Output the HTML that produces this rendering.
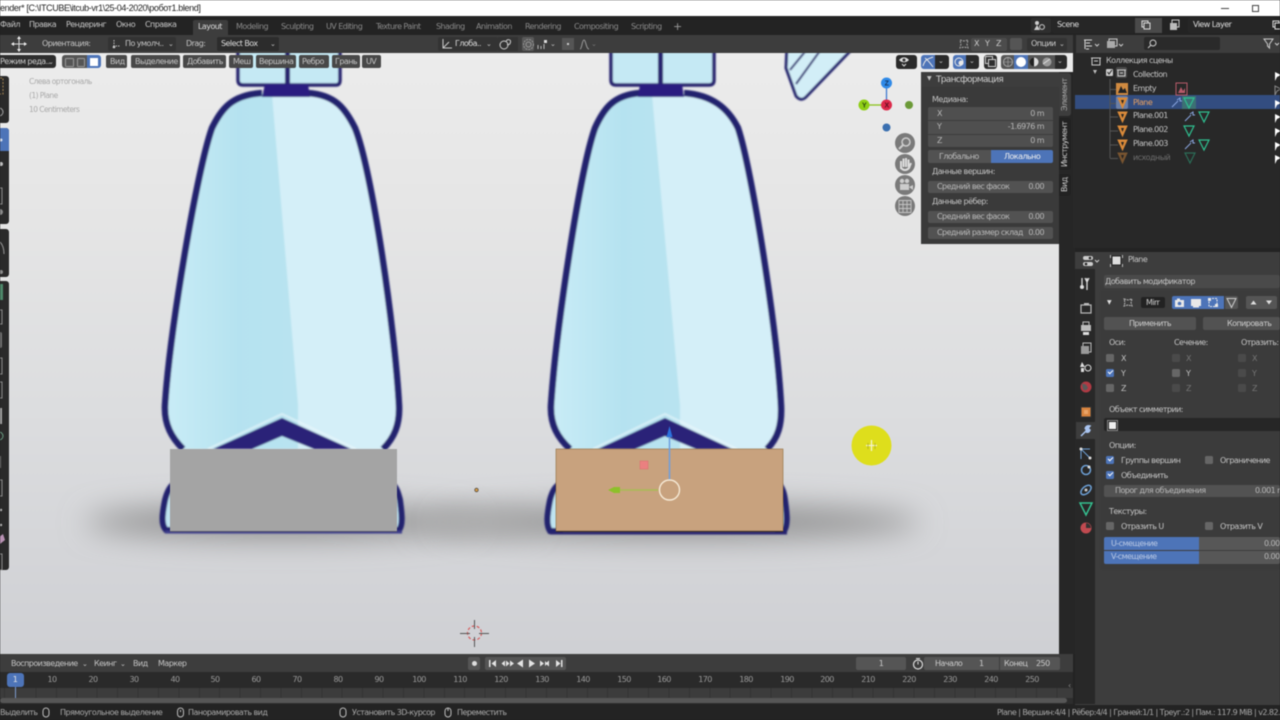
<!DOCTYPE html>
<html lang="ru"><head><meta charset="utf-8"><title>Blender</title>
<style>
html,body{margin:0;padding:0;width:1280px;height:720px;overflow:hidden;background:#232323}
#r{position:relative;width:1280px;height:720px;overflow:hidden;font-family:"DejaVu Sans","Liberation Sans",sans-serif;font-size:8px;letter-spacing:-.55px;color:#c4c4c4;filter:blur(.45px);background:#232323}
.b{position:absolute}
.t{position:absolute;white-space:nowrap;line-height:12px;height:12px}
.c{transform:translateX(-50%)}
.e{text-align:right}
.f{position:absolute;background:#545454;border-radius:2px}
.d{position:absolute;background:#262626;border-radius:2px}
.k{position:absolute;width:8px;height:8px;background:#666;border-radius:1.5px}
.k.o{background:#4d74b8}
.k.o:after{content:"";position:absolute;left:1.5px;top:1px;width:4px;height:2px;border-left:1.2px solid #fff;border-bottom:1.2px solid #fff;transform:rotate(-45deg)}
.k.g{background:#4a4a4a}
.u{color:#777}
svg{position:absolute;overflow:visible}
</style></head><body><div id="r">

<!-- title bar -->
<div class="b" style="left:0;top:0;width:1280px;height:16px;background:#fff"></div>
<div class="t" style="left:0;top:2px;color:#222;font-family:'Liberation Sans',sans-serif;font-size:9px;letter-spacing:-.38px">ender* [C:\ITCUBE\itcub-vr1\25-04-2020\робот1.blend]</div>
<div class="b" style="left:1221px;top:8px;width:8px;height:1px;background:#444"></div>
<div class="b" style="left:1252px;top:5px;width:5px;height:5px;border:1px solid #444;background:#fff"></div>

<!-- top bar -->
<div class="b" style="left:0;top:16px;width:1280px;height:19px;background:#232323"></div>
<div class="t" style="left:0;top:19px">Файл</div>
<div class="t" style="left:29px;top:19px">Правка</div>
<div class="t" style="left:66px;top:19px">Рендеринг</div>
<div class="t" style="left:116px;top:19px">Окно</div>
<div class="t" style="left:145px;top:19px">Справка</div>
<div class="b" style="left:193px;top:20px;width:35px;height:15px;background:#3d3d3d;border-radius:2px 2px 0 0"></div>
<div class="t" style="left:198px;top:21px;color:#ddd">Layout</div>
<div class="t u" style="left:236px;top:21px;color:#8a8a8a">Modeling</div>
<div class="t" style="left:281px;top:21px;color:#8a8a8a">Sculpting</div>
<div class="t" style="left:326px;top:21px;color:#8a8a8a">UV Editing</div>
<div class="t" style="left:376px;top:21px;color:#8a8a8a">Texture Paint</div>
<div class="t" style="left:436px;top:21px;color:#8a8a8a">Shading</div>
<div class="t" style="left:476px;top:21px;color:#8a8a8a">Animation</div>
<div class="t" style="left:525px;top:21px;color:#8a8a8a">Rendering</div>
<div class="t" style="left:574px;top:21px;color:#8a8a8a">Compositing</div>
<div class="t" style="left:631px;top:21px;color:#8a8a8a">Scripting</div>
<div class="t" style="left:673px;top:21px;font-size:11px;color:#999">+</div>

<div class="b" style="left:1031px;top:18px;width:20px;height:15px;background:#2e2e2e;border-radius:2px"></div>
<svg style="left:1033px;top:20px" width="14" height="11"><circle cx="4" cy="3" r="2" fill="#ccc"/><path d="M1 10 L4 5 L7 10Z" fill="#ccc"/><circle cx="9" cy="7" r="2.4" fill="none" stroke="#ccc"/></svg>
<div class="d" style="left:1052px;top:18px;width:83px;height:15px"></div>
<div class="t" style="left:1057px;top:19px;color:#ddd">Scene</div>
<div class="b" style="left:1135px;top:18px;width:27px;height:15px;background:#4a4a4a"></div>
<svg style="left:1141px;top:20px" width="10" height="10"><rect x="1" y="1" width="6" height="6" fill="none" stroke="#ddd"/><rect x="3" y="3" width="6" height="6" fill="#4a4a4a" stroke="#ddd"/></svg>
<svg style="left:1170px;top:20px" width="14" height="11"><rect x="2" y="0" width="7" height="7" fill="none" stroke="#ccc"/><rect x="0" y="3" width="7" height="7" fill="#bbb"/></svg>
<div class="d" style="left:1188px;top:18px;width:87px;height:15px"></div>
<div class="t" style="left:1193px;top:19px;color:#ddd">View Layer</div>
<svg style="left:1272px;top:20px" width="10" height="10"><rect x="1" y="1" width="6" height="6" fill="none" stroke="#ddd"/><rect x="3" y="3" width="6" height="6" fill="#232323" stroke="#ddd"/></svg>

<!-- tool header -->
<div class="b" style="left:0;top:35px;width:1073px;height:18px;background:#3d3d3d"></div>
<svg style="left:11px;top:36px" width="16" height="16"><path d="M8 1V15M1 8H15" stroke="#ddd" stroke-width="1" fill="none"/><path d="M8 0L10 3H6ZM8 16L10 13H6ZM0 8L3 6V10ZM16 8L13 6V10Z" fill="#eee"/></svg>
<div class="t" style="left:42px;top:38px">Ориентация:</div>
<div class="d" style="left:108px;top:37px;width:68px;height:14px;background:#333"></div>
<svg style="left:111px;top:39px" width="10" height="11"><path d="M3 1V7H9" stroke="#bbb" fill="none" stroke-dasharray="1.5 1"/><circle cx="3" cy="8" r="1.3" fill="#ccc"/></svg>
<div class="t" style="left:125px;top:38px">По умолч..</div>
<div class="t" style="left:168px;top:38px;font-size:7px">⌄</div>
<div class="t" style="left:186px;top:38px">Drag:</div>
<div class="d" style="left:217px;top:37px;width:62px;height:14px;background:#2c2c2c"></div>
<div class="t" style="left:221px;top:38px;color:#ddd">Select Box</div>
<div class="t" style="left:270px;top:38px;font-size:7px">⌄</div>

<div class="b" style="left:438px;top:37px;width:60px;height:14px;background:#333;border-radius:2px"></div>
<svg style="left:441px;top:38px" width="12" height="12"><path d="M2 1V10H11M2 10L8 4" stroke="#ccc" fill="none"/></svg>
<div class="t" style="left:455px;top:38px;color:#ddd">Глоба..</div>
<div class="t" style="left:486px;top:38px;font-size:7px">⌄</div>
<div class="b" style="left:498px;top:37px;width:20px;height:14px;background:#333"></div>
<svg style="left:499px;top:38px" width="13" height="12"><circle cx="5" cy="7" r="4" fill="none" stroke="#ccc"/><path d="M7 3.5C8 1 12 1 11.500 4C11 7 9 7 8 6.500" fill="none" stroke="#ccc"/></svg>
<div class="b" style="left:522px;top:37px;width:12px;height:14px;background:#595959;border-radius:2px"></div>
<svg style="left:523px;top:39px" width="11" height="11"><circle cx="5.500" cy="5.500" r="5" fill="none" stroke="#999" stroke-dasharray="2 1"/><circle cx="5.500" cy="5.500" r="2.500" fill="none" stroke="#999"/></svg>
<svg style="left:537px;top:39px" width="11" height="11"><path d="M1 6V10M4 7V10M7 5V10" stroke="#bbb"/><rect x="7" y="1" width="3" height="3" fill="#ddd"/></svg>
<div class="t" style="left:550px;top:38px;font-size:7px">⌄</div>
<div class="b" style="left:562px;top:38px;width:12px;height:12px;background:#555"></div>
<div class="b" style="left:567px;top:43px;width:2px;height:2px;background:#ccc"></div>
<svg style="left:579px;top:39px" width="12" height="11"><path d="M1 10C3 10 3 1 5 1C7 1 7 10 10 10" fill="none" stroke="#999"/></svg>
<div class="t" style="left:591px;top:38px;font-size:7px;color:#777">⌄</div>

<svg style="left:958px;top:38px" width="12" height="12"><path d="M2 2L6 3L10 2L9 6L10 10L6 9L2 10L3 6Z" fill="none" stroke="#aaa" stroke-dasharray="2 1"/></svg>
<div class="b" style="left:971px;top:38px;width:36px;height:13px;background:#4c4c4c;border-radius:2px"></div>
<div class="t" style="left:974px;top:38px;color:#ccc">X</div>
<div class="t" style="left:985px;top:38px;color:#ccc">Y</div>
<div class="t" style="left:996px;top:38px;color:#ccc">Z</div>
<div class="b" style="left:1010px;top:38px;width:12px;height:12px;background:#555;border-radius:2px"></div>
<div class="b" style="left:1027px;top:38px;width:40px;height:13px;background:#333;border-radius:2px"></div>
<div class="t" style="left:1031px;top:38px;color:#ccc">Опции</div>
<div class="t" style="left:1059px;top:38px;font-size:7px">⌄</div>

<!-- viewport -->
<div class="b" style="left:0;top:53px;width:1073px;height:601px;background:linear-gradient(180deg,#ececec 0%,#e6e6e6 25%,#dcdddf 60%,#cfd0d4 100%);overflow:hidden">
<svg style="left:0;top:-53px" width="1073" height="654">
<defs>
<filter id="bl" x="-30%" y="-150%" width="160%" height="400%"><feGaussianBlur stdDeviation="15"/></filter>
<filter id="sf"><feGaussianBlur stdDeviation=".8"/></filter>
<linearGradient id="lb" x1="0" x2="1" y1="0" y2="0"><stop offset="0" stop-color="#c9ecf6"/><stop offset=".55" stop-color="#b5e2f0"/><stop offset="1" stop-color="#b8e3f0"/></linearGradient>
</defs>
<ellipse cx="280" cy="522" rx="195" ry="16" fill="#8c8c8c" filter="url(#bl)"/>
<ellipse cx="680" cy="522" rx="240" ry="16" fill="#8c8c8c" filter="url(#bl)"/>
<ellipse cx="475" cy="522" rx="60" ry="9" fill="#a8a8a8" filter="url(#bl)"/>

<g filter="url(#sf)">
<!-- right diagonal thing -->
<path d="M787 45L786 68L796 96Q801 102 806 97L856 45Z" fill="#d2eef7" stroke="#26266f" stroke-width="3"/>
<path d="M790 70L808 48M796 84L822 48" stroke="#26266f" stroke-width="2" fill="none"/>

<!-- left leg -->
<path d="M238 45V80Q238 85 243 85H336Q340 85 340 80V45Z" fill="#c5e9f4" stroke="#25246e" stroke-width="3.500"/>
<rect x="285" y="45" width="5" height="42" fill="#25246e"/>
<path d="M262 93C232 95 222 108 212 128C197 170 170 330 165 405C164 425 172 438 183 449H383C394 438 400 425 399 405C395 330 372 170 355 128C345 108 335 95 308 93Z" fill="#d4eff8"/>
<path d="M262 93C232 95 222 108 212 128C197 170 170 330 165 405C164 425 172 438 183 449H298L298 405L272 95Z" fill="url(#lb)"/>
<path d="M262 93C232 95 222 108 212 128C197 170 170 330 165 405C164 425 172 438 183 449M308 93C335 95 345 108 355 128C372 170 395 330 399 405C400 425 394 438 383 449" fill="none" stroke="#23236e" stroke-width="6.500"/>
<path d="M265 84H308L310 97H262Z" fill="#2c1f80"/>
<path d="M208 449L282 414L356 449" fill="none" stroke="#eef8fb" stroke-width="2" opacity=".6"/>
<path d="M213 449L282 418L351 449H314L282 436L252 449Z" fill="#2a2378"/>
<path d="M165 500C162 515 161 525 166 530H174V484C170 486 167 492 165 500Z" fill="#bfe4f1" stroke="#23236e" stroke-width="6"/>
<path d="M400 500C402 515 403 525 399 530H392V484C396 486 398 492 400 500Z" fill="#bfe4f1" stroke="#23236e" stroke-width="6"/>
<path d="M165 532H402" stroke="#3a3a8a" stroke-width="3"/>

<!-- right leg -->
<path d="M611 45V80Q611 85 616 85H709Q714 85 714 80V45Z" fill="#c5e9f4" stroke="#25246e" stroke-width="3.500"/>
<rect x="658" y="45" width="5" height="42" fill="#25246e"/>
<path d="M640 93C614 95 604 108 595 128C580 170 556 330 551 405C550 425 558 438 570 449H767C778 438 782 425 781 405C777 330 752 170 738 128C728 108 712 95 684 93Z" fill="#d4eff8"/>
<path d="M640 93C614 95 604 108 595 128C580 170 556 330 551 405C550 425 558 438 570 449H680L680 405L652 95Z" fill="url(#lb)"/>
<path d="M640 93C614 95 604 108 595 128C580 170 556 330 551 405C550 425 558 438 570 449M684 93C712 95 728 108 738 128C752 170 777 330 781 405C782 425 778 438 767 449" fill="none" stroke="#23236e" stroke-width="6.500"/>
<path d="M640 84H682L684 97H638Z" fill="#2c1f80"/>
<path d="M593 449L665 414L737 449" fill="none" stroke="#eef8fb" stroke-width="2" opacity=".6"/>
<path d="M598 449L665 418L732 449H696L665 436L635 449Z" fill="#2a2378"/>
<path d="M550 500C547 515 546 525 550 531H560V484C555 486 552 492 550 500Z" fill="#bfe4f1" stroke="#23236e" stroke-width="6"/>
<path d="M785 500C787 515 788 525 784 531H778V484C782 486 784 492 785 500Z" fill="#bfe4f1" stroke="#23236e" stroke-width="6"/>
<path d="M550 533H787" stroke="#25246e" stroke-width="3"/>
</g>

<rect x="170" y="449" width="227" height="82" fill="#a4a4a4"/>
<path d="M170 531.500H397" stroke="#55566b" stroke-width="1"/>
<rect x="556" y="449" width="227" height="82" fill="#c8a27e"/>
<rect x="556" y="449" width="227" height="82" fill="none" stroke="#8f6d3c" stroke-width=".6"/>
<path d="M556 531.500H783" stroke="#3a2f2a" stroke-width="1"/>

<!-- gizmo -->
<rect x="640" y="461" width="8" height="8" fill="#ea8080" stroke="#d96c6c" stroke-width=".5"/>
<path d="M669.500 480V435" stroke="#6c9fe0" stroke-width="1.500"/>
<path d="M669.500 426L666.500 437H672.500Z" fill="#2b72de"/>
<path d="M658 490H617" stroke="#a8bc55" stroke-width="1.500"/>
<path d="M608 490L614 487H620V493H614Z" fill="#8dc02a"/>
<circle cx="669.500" cy="490" r="10" fill="none" stroke="#f6ead6" stroke-width="1.400"/>
<circle cx="476.500" cy="490" r="1.800" fill="#d09a4a" stroke="#333" stroke-width=".6"/>

<!-- 3d cursor -->
<circle cx="474.500" cy="633" r="7" fill="none" stroke="#d65c5c" stroke-width="1.200" stroke-dasharray="3 2"/>
<path d="M460 633.500H470M479 633.500H489M474.500 620V629M474.500 637V647" stroke="#555" stroke-width="1"/>

<!-- mouse highlight -->
<circle cx="871.500" cy="445.500" r="20" fill="#dede1c"/>
<path d="M871.500 440V451M866 445.500H877" stroke="#f3f3cf" stroke-width="1.300"/>
<path d="M868 443V449M875 443V449" stroke="#8f8f20" stroke-width=".5"/>

<!-- nav gizmo -->
<path d="M886.500 88V105" stroke="#3f7ad0" stroke-width="1.300"/>
<path d="M869 105H882" stroke="#8bc21d" stroke-width="1.300"/>
<circle cx="886.500" cy="83" r="5.500" fill="#2f8ae8"/>
<circle cx="864" cy="105" r="5.500" fill="#8fcf17"/>
<circle cx="886.500" cy="105" r="5.500" fill="#dc2a4a"/>
<circle cx="909" cy="105" r="4" fill="#6c9a38"/>
<circle cx="886.500" cy="127.500" r="4" fill="#3a6fb0"/>
<text x="886.500" y="85.500" font-size="7" font-family="Liberation Sans" fill="#14355f" text-anchor="middle" font-weight="700">Z</text>
<text x="864" y="107.500" font-size="7" font-family="Liberation Sans" fill="#2c4a10" text-anchor="middle" font-weight="700">Y</text>
<text x="886.500" y="107.500" font-size="7" font-family="Liberation Sans" fill="#5d1020" text-anchor="middle" font-weight="700">X</text>
<circle cx="905" cy="143" r="10" fill="#7a7a7a"/>
<circle cx="905" cy="164" r="10" fill="#7a7a7a"/>
<circle cx="905" cy="185" r="10" fill="#7a7a7a"/>
<circle cx="905" cy="206" r="10" fill="#7a7a7a"/>
<circle cx="906" cy="142" r="4" fill="none" stroke="#ccc" stroke-width="1.500"/>
<path d="M903 145L899 149" stroke="#ccc" stroke-width="2"/>
<path d="M901 169V161M903.500 167V158.500M906 167V158M908.500 167V159.500M901 168Q905 172 909 168L911 163" stroke="#ddd" stroke-width="2" fill="none"/>
<rect x="900" y="184" width="9" height="6" fill="#ccc"/><circle cx="902" cy="181" r="2.200" fill="#ccc"/><circle cx="907" cy="181" r="2.200" fill="#ccc"/><path d="M909 187L913 185V190Z" fill="#ccc"/>
<path d="M899 200.500H911V212.500H899ZM899 204.500H911M899 208.500H911M903 200.500V212.500M907 200.500V212.500" fill="none" stroke="#c4c4c4" stroke-width=".9"/>
</svg>
</div>

<!-- overlay text -->
<div class="t" style="left:29px;top:76px;color:#a9a9a9;font-size:7.500px">Слева ортогональ</div>
<div class="t" style="left:29px;top:90px;color:#a9a9a9;font-size:7.500px">(1) Plane</div>
<div class="t" style="left:29px;top:104px;color:#a9a9a9;font-size:7.500px">10 Centimeters</div>

<!-- viewport header -->
<div class="b" style="left:0;top:55px;width:56px;height:13px;background:#2d2d2d;border-radius:0 3px 3px 0"></div>
<div class="t" style="left:0;top:56px;color:#ccc">Режим реда..</div>
<div class="t" style="left:48px;top:56px;font-size:7px">⌄</div>
<div class="b" style="left:62px;top:55px;width:25px;height:13px;background:#555;border-radius:3px 0 0 3px"></div>
<div class="b" style="left:87px;top:55px;width:14px;height:13px;background:#4d74b8;border-radius:0 3px 3px 0"></div>
<div class="b" style="left:65px;top:58px;width:7px;height:7px;border:1px solid #999;border-radius:1px"></div>
<div class="b" style="left:77px;top:58px;width:6px;height:7px;border:1px solid #999;border-radius:1px"></div>
<div class="b" style="left:90px;top:58px;width:8px;height:8px;background:#fff"></div>
<div class="b" style="left:106px;top:55px;width:21px;height:13px;background:#484848;border-radius:2px"></div>
<div class="t" style="left:110px;top:56px">Вид</div>
<div class="b" style="left:131px;top:55px;width:49px;height:13px;background:#484848;border-radius:2px"></div>
<div class="t" style="left:135px;top:56px">Выделение</div>
<div class="b" style="left:183px;top:55px;width:43px;height:13px;background:#484848;border-radius:2px"></div>
<div class="t" style="left:187px;top:56px">Добавить</div>
<div class="b" style="left:229px;top:55px;width:24px;height:13px;background:#484848;border-radius:2px"></div>
<div class="t" style="left:233px;top:56px">Меш</div>
<div class="b" style="left:256px;top:55px;width:40px;height:13px;background:#484848;border-radius:2px"></div>
<div class="t" style="left:259px;top:56px">Вершина</div>
<div class="b" style="left:299px;top:55px;width:30px;height:13px;background:#484848;border-radius:2px"></div>
<div class="t" style="left:302px;top:56px">Ребро</div>
<div class="b" style="left:332px;top:55px;width:28px;height:13px;background:#484848;border-radius:2px"></div>
<div class="t" style="left:335px;top:56px">Грань</div>
<div class="b" style="left:362px;top:55px;width:19px;height:13px;background:#484848;border-radius:2px"></div>
<div class="t" style="left:366px;top:56px">UV</div>

<div class="b" style="left:896px;top:55px;width:21px;height:14px;background:#2a2a2a;border-radius:3px"></div>
<svg style="left:898px;top:57px" width="12" height="10"><path d="M1 3C4 -.5 8 -.5 11 3C8 6 4 6 1 3Z" fill="#ddd"/><circle cx="6" cy="3" r="1.500" fill="#333"/><path d="M4 7L6 9L8 7" stroke="#ddd" fill="none"/></svg>
<div class="b" style="left:921px;top:55px;width:14px;height:14px;background:#4d74b8;border-radius:3px 0 0 3px"></div>
<svg style="left:922px;top:56px" width="12" height="12"><path d="M1 10C3 3 6 3 11 1M3 2C6 4 8 7 11 11" stroke="#e8e8e8" fill="none"/></svg>
<div class="b" style="left:935px;top:55px;width:14px;height:14px;background:#2a2a2a;border-radius:0 3px 3px 0"></div>
<div class="t" style="left:938px;top:55px;font-size:7px">⌄</div>
<div class="b" style="left:953px;top:55px;width:13px;height:14px;background:#4d74b8;border-radius:3px 0 0 3px"></div>
<svg style="left:954px;top:57px" width="11" height="10"><circle cx="5" cy="5" r="4" fill="none" stroke="#e8e8e8"/><circle cx="7" cy="6" r="2.500" fill="#e8e8e8"/></svg>
<div class="b" style="left:966px;top:55px;width:13px;height:14px;background:#2a2a2a;border-radius:0 3px 3px 0"></div>
<div class="t" style="left:969px;top:55px;font-size:7px">⌄</div>
<div class="b" style="left:984px;top:55px;width:13px;height:14px;background:#2e2e2e;border-radius:3px"></div>
<svg style="left:985px;top:56px" width="11" height="11"><rect x=".5" y=".5" width="7" height="7" fill="none" stroke="#ccc"/><rect x="3.500" y="3.500" width="7" height="7" fill="#2e2e2e" stroke="#ccc"/></svg>
<div class="b" style="left:1001px;top:55px;width:54px;height:14px;background:#555;border-radius:3px 0 0 3px"></div>
<div class="b" style="left:1014px;top:55px;width:14px;height:14px;background:#4d74b8"></div>
<svg style="left:1001px;top:55px" width="54" height="14"><circle cx="7" cy="7" r="4.500" fill="none" stroke="#aaa"/><path d="M2.500 7H11.500M7 2.500V11.500" stroke="#aaa" stroke-width=".6"/><circle cx="20" cy="7" r="5" fill="#fff"/><circle cx="33" cy="7" r="4.500" fill="#ddd"/><path d="M33 2.500A4.500 4.500 0 0 0 33 11.500Z" fill="#222"/><circle cx="46" cy="7" r="4.500" fill="#999"/><path d="M42 9L49 4" stroke="#ddd"/></svg>
<div class="b" style="left:1055px;top:55px;width:12px;height:14px;background:#2a2a2a;border-radius:0 3px 3px 0"></div>
<div class="t" style="left:1057px;top:55px;font-size:7px">⌄</div>

<!-- left toolbar -->
<div class="b" style="left:0;top:76px;width:9px;height:47px;background:#2a2a2a;border-radius:0 3px 3px 0"></div>
<div class="b" style="left:0;top:128px;width:9px;height:96px;background:#2a2a2a;border-radius:0 3px 3px 0"></div>
<div class="b" style="left:0;top:128px;width:9px;height:23px;background:#4d74b8;border-radius:0 3px 0 0"></div>
<div class="b" style="left:0;top:229px;width:9px;height:48px;background:#2a2a2a;border-radius:0 3px 3px 0"></div>
<div class="b" style="left:0;top:281px;width:9px;height:289px;background:#2a2a2a;border-radius:0 3px 3px 0"></div>
<svg style="left:0;top:70px" width="9" height="510" opacity=".75">
<path d="M0 8H3V24H0" fill="none" stroke="#c9a060" stroke-dasharray="2 1.500"/><circle cx="-1" cy="42" r="4" fill="none" stroke="#ccc"/>
<circle cx="1" cy="70" r="1.500" fill="#fff"/><circle cx="1" cy="94" r="2" fill="#eee"/><path d="M0 118H2V134H0" fill="none" stroke="#aaa"/><circle cx="0" cy="142" r="3" fill="#aaa"/>
<path d="M0 172Q4 176 4 184" fill="none" stroke="#bbb"/><circle cx="1" cy="202" r="2" fill="#aaa"/>
<rect x="-3" y="214" width="6" height="16" fill="#5aa880"/><rect x="-4" y="240" width="6" height="14" fill="none" stroke="#aaa"/><rect x="-3" y="262" width="5" height="16" rx="2" fill="#888"/><rect x="-4" y="288" width="6" height="16" fill="none" stroke="#aaa"/><rect x="-4" y="312" width="6" height="16" fill="none" stroke="#aaa"/><rect x="-1" y="338" width="3" height="16" fill="#ccc"/><circle cx="-1" cy="366" r="4" fill="none" stroke="#7fc0a0"/><rect x="-2" y="386" width="3" height="12" fill="#888"/><rect x="-4" y="410" width="6" height="16" fill="none" stroke="#aaa"/><circle cx="1" cy="440" r="1.200" fill="#ddd"/><circle cx="1" cy="455" r="1.200" fill="#ddd"/><path d="M-2 468L3 464L5 470L0 474Z" fill="#e9b5e2"/><rect x="-4" y="484" width="6" height="16" fill="none" stroke="#aaa"/>
</svg>

<!-- n panel -->
<div class="b" style="left:1059px;top:72px;width:16px;height:582px;background:#262626"></div>
<div class="b" style="left:921px;top:72px;width:138px;height:172px;background:#3a3a3a"></div>
<div class="b" style="left:921px;top:72px;width:138px;height:15px;background:#3d3d3d"></div>
<div class="t" style="left:927px;top:73px;font-size:6px">▼</div>
<div class="t" style="left:936px;top:74px;font-size:9px;letter-spacing:-.7px;color:#ccc">Трансформация</div>
<div class="t" style="left:932px;top:94px">Медиана:</div>
<div class="f" style="left:928px;top:107px;width:125px;height:40px;background:#4f4f4f"></div>
<div class="b" style="left:928px;top:120px;width:125px;height:1px;background:#3c3c3c"></div>
<div class="b" style="left:928px;top:134px;width:125px;height:1px;background:#3c3c3c"></div>
<div class="t" style="left:937px;top:108px;color:#b8b8b8">X</div>
<div class="t e" style="right:236px;top:108px;color:#b8b8b8">0 m</div>
<div class="t" style="left:937px;top:121px;color:#b8b8b8">Y</div>
<div class="t e" style="right:236px;top:121px;color:#b8b8b8">-1.6976 m</div>
<div class="t" style="left:937px;top:135px;color:#b8b8b8">Z</div>
<div class="t e" style="right:236px;top:135px;color:#b8b8b8">0 m</div>
<div class="f" style="left:928px;top:150px;width:63px;height:13px;border-radius:2px 0 0 2px;background:#525252"></div>
<div class="f" style="left:991px;top:150px;width:62px;height:13px;border-radius:0 2px 2px 0;background:#4d74b8"></div>
<div class="t" style="left:939px;top:151px;color:#bbb">Глобально</div>
<div class="t" style="left:1004px;top:151px;color:#eee">Локально</div>
<div class="t" style="left:932px;top:166px">Данные вершин:</div>
<div class="f" style="left:928px;top:181px;width:125px;height:12px;background:#525252"></div>
<div class="t" style="left:937px;top:181px;color:#b8b8b8">Средний вес фасок</div>
<div class="t e" style="right:236px;top:181px;color:#b8b8b8">0.00</div>
<div class="t" style="left:932px;top:196px">Данные рёбер:</div>
<div class="f" style="left:928px;top:211px;width:125px;height:12px;background:#525252"></div>
<div class="t" style="left:937px;top:211px;color:#b8b8b8">Средний вес фасок</div>
<div class="t e" style="right:236px;top:211px;color:#b8b8b8">0.00</div>
<div class="f" style="left:928px;top:227px;width:125px;height:12px;background:#525252"></div>
<div class="t" style="left:937px;top:227px;color:#b8b8b8">Средний размер склад</div>
<div class="t e" style="right:236px;top:227px;color:#b8b8b8">0.00</div>
<div class="b" style="left:1059px;top:73px;width:12px;height:43px;background:#3d3d3d;border-radius:0 3px 3px 0"></div>
<div class="b" style="left:1059px;top:118px;width:12px;height:52px;background:#222;border-radius:0 3px 3px 0"></div>
<div class="b" style="left:1059px;top:174px;width:12px;height:22px;background:#222;border-radius:0 3px 3px 0"></div>
<div class="t" style="left:1059px;top:73px;writing-mode:vertical-rl;transform:rotate(180deg);height:43px;width:12px;line-height:12px;text-align:center;color:#aaa">Элемент</div>
<div class="t" style="left:1059px;top:118px;writing-mode:vertical-rl;transform:rotate(180deg);height:52px;width:12px;line-height:12px;text-align:center;color:#ccc">Инструмент</div>
<div class="t" style="left:1059px;top:174px;writing-mode:vertical-rl;transform:rotate(180deg);height:22px;width:12px;line-height:12px;text-align:center;color:#ccc">Вид</div>

<!-- outliner -->
<div class="b" style="left:1073px;top:35px;width:207px;height:213px;background:#282828"></div>
<div class="b" style="left:1076px;top:35px;width:204px;height:18px;background:#3d3d3d"></div>
<svg style="left:1083px;top:38px" width="60" height="13"><path d="M1 2H9M3 5H7M3 8H9M3 11H6" stroke="#ddd" fill="none"/><path d="M2 2V11" stroke="#ddd"/><path d="M12 6L14 8L16 6" stroke="#ccc" fill="none"/><rect x="26" y="1" width="8" height="7" fill="none" stroke="#ccc"/><rect x="24" y="3" width="8" height="7" fill="#aaa"/><path d="M36 6L38 8L40 6" stroke="#ccc" fill="none"/></svg>
<div class="d" style="left:1144px;top:37px;width:76px;height:13px;background:#2a2a2a"></div>
<svg style="left:1147px;top:39px" width="10" height="10"><circle cx="6" cy="4" r="3" fill="none" stroke="#ccc"/><path d="M4 6L1 9" stroke="#ccc"/></svg>
<svg style="left:1263px;top:38px" width="18" height="12"><path d="M1 1H10L6.500 6V10L4.500 8V6Z" fill="none" stroke="#ccc"/><path d="M12 5L14 7L16 5" stroke="#ccc" fill="none"/></svg>

<div class="b" style="left:1075px;top:95px;width:205px;height:14px;background:#334d80"></div>

<svg style="left:1090px;top:55px" width="190" height="112">
<g fill="none" stroke="#ccc"><rect x="2" y="3" width="8" height="7"/><path d="M1 3H11M4 6H8"/></g>
<path d="M14 15L18 15L16 19Z" fill="#bbb" transform="translate(-11 0)"/>
<rect x="16" y="14" width="7" height="7" rx="1" fill="#ccc"/><path d="M17.500 17L19 19L22 15" stroke="#222" fill="none"/>
<rect x="26" y="12" width="11" height="11" rx="2" fill="#4a4a4a"/><g fill="none" stroke="#ccc"><rect x="28" y="15" width="7" height="6"/><path d="M27 15H36M30 18H33"/></g>
<path d="M20 24V103M20 34.500H28M20 48.500H28M20 62H28M20 76H28M20 90H28M20 103.500H28" stroke="#555" fill="none"/>
<rect x="26" y="41" width="12" height="13" rx="2" fill="#6a7fa8"/>
<rect x="26" y="28" width="12" height="12" fill="#d08a40"/><path d="M28 38L31 31L33 35L35 33L37 38Z" fill="#222"/>
<rect x="86" y="28" width="11" height="12" fill="none" stroke="#b85a6a"/><path d="M88 38L91 32L93 36L95 33V38Z" fill="#b85a6a"/>
<g fill="#d98a3a" stroke="#d98a3a"><path d="M28 43H37L32.500 53Z"/><path d="M28 57H37L32.500 67Z"/><path d="M28 71H37L32.500 81Z"/><path d="M28 85H37L32.500 95Z"/><path d="M28 98H37L32.500 108Z" opacity=".45"/></g>
<g fill="#222"><path d="M31 45H34L32.500 49Z"/><path d="M31 59H34L32.500 63Z"/><path d="M31 73H34L32.500 77Z"/><path d="M31 87H34L32.500 91Z"/><path d="M31 100H34L32.500 104Z"/></g>
<g fill="none" stroke="#8aa6e0"><path d="M82 52L88 46M87 45L90 43L90 46L92 46" /><path d="M95 66L101 60M100 59L103 57L103 60L105 60"/><path d="M95 94L101 88M100 87L103 85L103 88L105 88"/></g>
<rect x="92" y="41" width="14" height="13" fill="#3c7074"/>
<g fill="none" stroke="#2fbf90" stroke-width="1.200"><path d="M94 43H104L99 53Z"/><path d="M109 57H119L114 67Z"/><path d="M94 71H104L99 81Z"/><path d="M109 85H119L114 95Z"/><path d="M95 98H105L100 108Z" opacity=".45"/></g>
<g fill="#fff"><path d="M185 17L191 20L187 22L185 26Z"/><path d="M185 45L191 48L187 50L185 54Z"/><path d="M185 59L191 62L187 64L185 68Z"/><path d="M185 73L191 76L187 78L185 82Z"/><path d="M185 87L191 90L187 92L185 96Z"/><path d="M185 100L191 103L187 105L185 109Z"/></g>
<path d="M185 31L191 34L187 36L185 40Z" fill="none" stroke="#888"/>
</svg>
<div class="t" style="left:1106px;top:55px">Коллекция сцены</div>
<div class="t" style="left:1133px;top:69px">Collection</div>
<div class="t" style="left:1133px;top:83px">Empty</div>
<div class="t" style="left:1133px;top:97px;color:#e8a060">Plane</div>
<div class="t" style="left:1133px;top:110px">Plane.001</div>
<div class="t" style="left:1133px;top:124px">Plane.002</div>
<div class="t" style="left:1133px;top:138px">Plane.003</div>
<div class="t" style="left:1133px;top:152px;color:#6e6e6e">исходный</div>

<!-- properties -->
<div class="b" style="left:1075px;top:252px;width:205px;height:453px;background:#3d3d3d"></div>
<div class="b" style="left:1075px;top:269px;width:20px;height:436px;background:#282828"></div>
<svg style="left:1083px;top:255px" width="50" height="12"><rect x="0" y="1" width="10" height="4" rx="2" fill="#ccc"/><rect x="0" y="7" width="10" height="4" rx="2" fill="#ccc"/><circle cx="7" cy="3" r="1.300" fill="#222"/><circle cx="3" cy="9" r="1.300" fill="#222"/><path d="M12 5L14 7L16 5" stroke="#ccc" fill="none"/><rect x="29" y="1" width="9" height="9" fill="#ddd" stroke="#222"/><path d="M27.500 0V3M39.500 0V3M27.500 9V12M39.500 9V12" stroke="#bbb"/></svg>
<div class="t" style="left:1128px;top:254px">Plane</div>

<svg style="left:1076px;top:276px" width="20" height="262">
<path d="M6 2V9M11 2V14M9 2L11 6L13 2" fill="none" stroke="#ddd" stroke-width="1.300"/><circle cx="6" cy="11" r="2" fill="#ddd"/>
<rect x="5" y="29" width="10" height="8" fill="none" stroke="#bbb" stroke-width="1.200"/><rect x="8" y="27" width="5" height="2" fill="#bbb"/>
<rect x="5" y="49" width="10" height="6" fill="#bbb"/><rect x="7" y="46" width="6" height="4" fill="none" stroke="#bbb"/><rect x="7" y="56" width="6" height="3" fill="#ddd"/>
<rect x="7" y="67" width="8" height="9" fill="none" stroke="#bbb"/><rect x="5" y="70" width="8" height="8" fill="#999"/>
<path d="M6 86L9 91H4ZM5 92H8V96H5Z" fill="#ddd"/><circle cx="12" cy="92" r="3" fill="none" stroke="#ddd"/>
<circle cx="10" cy="111" r="5.500" fill="#b03a44"/><path d="M6 108Q10 107 12 112Q9 116 7 113Z" fill="#5a5a5a"/>
<rect x="5" y="131" width="10" height="10" fill="#d8843f" stroke="#333"/><rect x="8" y="134" width="4" height="4" fill="#e8a468"/>
<rect x="0" y="146" width="19" height="17" fill="#3d3d3d"/>
<path d="M5 160L10 155M9 153Q10 149 14 150L12 152.500L14 154Q13 157 10 156" fill="#a9c4f0" stroke="#a9c4f0" stroke-width="1.500"/>
<path d="M5 173L14 182M5 173V183M5 173H14" fill="none" stroke="#6da0d6"/><circle cx="5" cy="173" r="1.500" fill="#ddd"/><circle cx="14" cy="182" r="1.500" fill="#ddd"/>
<circle cx="10" cy="194" r="4.500" fill="none" stroke="#6da0d6" stroke-width="1.500"/><circle cx="13" cy="191" r="1.500" fill="#ddd"/>
<ellipse cx="10" cy="214" rx="6" ry="3.500" fill="none" stroke="#6da0d6" stroke-width="1.500" transform="rotate(-40 10 214)"/><circle cx="10" cy="214" r="1.500" fill="#ccc"/>
<path d="M4 227H16L10 239Z" fill="none" stroke="#35c090" stroke-width="1.500"/>
<circle cx="10" cy="252" r="5.500" fill="#c04a50"/><path d="M10 247A5 5 0 0 1 15 252H10Z" fill="#333"/>
</svg>

<div class="b" style="left:1100px;top:290px;width:180px;height:280px;background:#3b3b3b;border-radius:3px"></div>
<div class="f" style="left:1104px;top:275px;width:176px;height:13px;background:#4a4a4a"></div>
<div class="t" style="left:1105px;top:276px">Добавить модификатор</div>
<div class="t" style="left:1107px;top:297px;font-size:6px;color:#ddd">▼</div>
<svg style="left:1122px;top:297px" width="12" height="11"><path d="M2 2L6 3L10 2L9 5.500L10 9L6 8L2 9L3 5.500Z" fill="none" stroke="#bbb" stroke-dasharray="2 .8"/></svg>
<div class="b" style="left:1141px;top:297px;width:24px;height:11px;background:#222;border-radius:2px"></div>
<div class="t" style="left:1146px;top:297px;color:#ccc">Mirr</div>
<div class="b" style="left:1172px;top:296px;width:52px;height:13px;background:#4d74b8;border-radius:2px 0 0 2px"></div>
<div class="b" style="left:1225px;top:296px;width:13px;height:13px;background:#555;border-radius:0 2px 2px 0"></div>
<svg style="left:1172px;top:296px" width="68" height="13"><rect x="3" y="4" width="9" height="7" fill="#e8e8e8"/><rect x="5" y="2.500" width="3" height="2" fill="#e8e8e8"/><circle cx="7.500" cy="7.500" r="1.800" fill="#4d74b8"/><rect x="19" y="3" width="10" height="7" fill="#e8e8e8"/><rect x="21" y="10" width="6" height="1.500" fill="#e8e8e8"/><rect x="37" y="2.500" width="8" height="8" fill="none" stroke="#e8e8e8" stroke-dasharray="2 1"/><rect x="36" y="2" width="3" height="3" fill="#e8e8e8"/><rect x="43" y="8" width="3" height="3" fill="#e8e8e8"/><path d="M55 2.500H64L59.500 11.500Z" fill="none" stroke="#ccc"/></svg>
<div class="b" style="left:1246px;top:296px;width:31px;height:13px;background:#555;border-radius:2px"></div>
<svg style="left:1246px;top:296px" width="31" height="13"><path d="M4.500 8.500L7.500 4.500L10.500 8.500Z" fill="#ddd"/><path d="M20 4.500H26L23 8.500Z" fill="#ddd"/></svg>

<div class="f" style="left:1104px;top:317px;width:92px;height:13px;background:#525252"></div>
<div class="t c" style="left:1150px;top:318px;color:#ccc">Применить</div>
<div class="f" style="left:1203px;top:317px;width:77px;height:13px;background:#525252"></div>
<div class="t" style="left:1227px;top:318px;color:#ccc">Копировать</div>

<div class="t" style="left:1109px;top:337px">Оси:</div>
<div class="t" style="left:1174px;top:337px">Сечение:</div>
<div class="t" style="left:1241px;top:337px">Отразить:</div>

<div class="k" style="left:1106px;top:354px"></div><div class="t" style="left:1121px;top:353px">X</div>
<div class="k o" style="left:1106px;top:369px"></div><div class="t" style="left:1121px;top:368px">Y</div>
<div class="k" style="left:1106px;top:384px"></div><div class="t" style="left:1121px;top:383px">Z</div>
<div class="k g" style="left:1172px;top:354px"></div><div class="t u" style="left:1186px;top:353px">X</div>
<div class="k" style="left:1172px;top:369px"></div><div class="t" style="left:1186px;top:368px">Y</div>
<div class="k g" style="left:1172px;top:384px"></div><div class="t u" style="left:1186px;top:383px">Z</div>
<div class="k g" style="left:1238px;top:354px"></div><div class="t u" style="left:1252px;top:353px">X</div>
<div class="k g" style="left:1238px;top:369px"></div><div class="t u" style="left:1252px;top:368px">Y</div>
<div class="k g" style="left:1238px;top:384px"></div><div class="t u" style="left:1252px;top:383px">Z</div>

<div class="t" style="left:1109px;top:404px">Объект симметрии:</div>
<div class="b" style="left:1104px;top:418px;width:176px;height:13px;background:#262626;border-radius:2px 0 0 2px"></div>
<div class="b" style="left:1108px;top:421px;width:7px;height:7px;background:#eee;border:1px solid #222;outline:1px solid #888"></div>

<div class="t" style="left:1109px;top:440px">Опции:</div>
<div class="k o" style="left:1106px;top:456px"></div><div class="t" style="left:1121px;top:455px">Группы вершин</div>
<div class="k" style="left:1205px;top:456px"></div><div class="t" style="left:1220px;top:455px">Ограничение</div>
<div class="k o" style="left:1106px;top:471px"></div><div class="t" style="left:1121px;top:470px">Объединить</div>
<div class="f" style="left:1104px;top:485px;width:176px;height:12px;background:#525252"></div>
<div class="t" style="left:1115px;top:485px;color:#b8b8b8">Порог для объединения</div>
<div class="t" style="left:1255px;top:485px;color:#b8b8b8">0.001 m</div>

<div class="t" style="left:1109px;top:506px">Текстуры:</div>
<div class="k" style="left:1106px;top:522px"></div><div class="t" style="left:1121px;top:521px">Отразить U</div>
<div class="k" style="left:1205px;top:522px"></div><div class="t" style="left:1220px;top:521px">Отразить V</div>
<div class="f" style="left:1104px;top:537px;width:176px;height:27px;background:#575757"></div>
<div class="f" style="left:1104px;top:537px;width:95px;height:27px;background:#4d74b8;border-radius:2px 0 0 2px"></div>
<div class="b" style="left:1104px;top:550px;width:176px;height:1px;background:#3c3c3c"></div>
<div class="t" style="left:1111px;top:538px;color:#b9c8e4">U-смещение</div>
<div class="t" style="left:1264px;top:538px;color:#b8b8b8">0.00</div>
<div class="t" style="left:1111px;top:551px;color:#b9c8e4">V-смещение</div>
<div class="t" style="left:1264px;top:551px;color:#b8b8b8">0.00</div>

<!-- timeline -->
<div class="b" style="left:0;top:654px;width:1073px;height:18px;background:#3d3d3d"></div>
<div class="b" style="left:0;top:672px;width:1073px;height:16px;background:#2a2a2a"></div>
<div class="b" style="left:0;top:688px;width:1073px;height:10px;background-color:#3c3c3c;background-image:repeating-linear-gradient(90deg,#343434 0,#343434 1px,transparent 1px,transparent 20.420px);background-position:15px 0"></div>
<div class="b" style="left:0;top:698px;width:1073px;height:6px;background:#2d2d2d"></div>
<div class="b" style="left:0;top:698px;width:1067px;height:5px;background:#565656;border-radius:3px"></div>
<div class="b" style="left:0;top:704px;width:1280px;height:16px;background:#232323"></div>
<div class="b" style="left:1075px;top:704px;width:205px;height:1px;background:#3d3d3d"></div>

<div class="t" style="left:11px;top:658px">Воспроизведение</div>
<div class="t" style="left:82px;top:658px;font-size:7px">⌄</div>
<div class="t" style="left:94px;top:658px">Кеинг</div>
<div class="t" style="left:120px;top:658px;font-size:7px">⌄</div>
<div class="t" style="left:133px;top:658px">Вид</div>
<div class="t" style="left:158px;top:658px">Маркер</div>

<div class="b" style="left:468px;top:657px;width:12px;height:13px;background:#555;border-radius:2px"></div>
<div class="b" style="left:472px;top:661px;width:5px;height:5px;border-radius:50%;background:#ddd"></div>
<div class="b" style="left:485px;top:657px;width:81px;height:13px;background:#555;border-radius:2px"></div>
<svg style="left:485px;top:657px" width="81" height="13" fill="#e4e4e4"><path d="M4 3H5.500V10H4ZM11 3V10L6.500 6.500Z"/><path d="M20 3.500V9.500L16.500 6.500ZM21 3.500V9.500L24.500 6.500ZM25 3.500V9.500L29 6.500Z"/><path d="M38 2.500V10.500L32 6.500Z"/><path d="M44 2.500V10.500L50 6.500Z"/><path d="M55 3.500L59 6.500L55 9.500ZM60 4L62.500 6.500L60 9ZM64 3.500V9.500L60.500 6.500Z"/><path d="M71 3V10L75.500 6.500ZM76 3H77.500V10H76Z"/></svg>

<div class="f" style="left:856px;top:657px;width:50px;height:13px;background:#555"></div>
<div class="t c" style="left:881px;top:658px;color:#ccc">1</div>
<svg style="left:912px;top:657px" width="12" height="13"><circle cx="6" cy="7.500" r="4.500" fill="none" stroke="#ddd" stroke-width="1.200"/><path d="M4 1.500H8M6 7.500V4.500" stroke="#ddd"/></svg>
<div class="f" style="left:924px;top:657px;width:75px;height:13px;background:#555;border-radius:2px 0 0 2px"></div>
<div class="t" style="left:935px;top:658px;color:#ccc">Начало</div>
<div class="t" style="left:979px;top:658px;color:#ccc">1</div>
<div class="f" style="left:1000px;top:657px;width:60px;height:13px;background:#555;border-radius:0 2px 2px 0"></div>
<div class="t" style="left:1004px;top:658px;color:#ccc">Конец</div>
<div class="t" style="left:1036px;top:658px;color:#ccc">250</div>

<div class="b" style="left:7px;top:673px;width:17px;height:14px;background:#4d74b8;border-radius:3px"></div>
<div class="b" style="left:15px;top:687px;width:1px;height:11px;background:#7d9cd0"></div>
<div class="t c" style="left:15px;top:674px;color:#e6e6e6">1</div>
<div class="t c" style="left:52px;top:674px;color:#9a9a9a">10</div>
<div class="t c" style="left:93px;top:674px;color:#9a9a9a">20</div>
<div class="t c" style="left:134px;top:674px;color:#9a9a9a">30</div>
<div class="t c" style="left:175px;top:674px;color:#9a9a9a">40</div>
<div class="t c" style="left:215px;top:674px;color:#9a9a9a">50</div>
<div class="t c" style="left:256px;top:674px;color:#9a9a9a">60</div>
<div class="t c" style="left:297px;top:674px;color:#9a9a9a">70</div>
<div class="t c" style="left:338px;top:674px;color:#9a9a9a">80</div>
<div class="t c" style="left:379px;top:674px;color:#9a9a9a">90</div>
<div class="t c" style="left:419px;top:674px;color:#9a9a9a">100</div>
<div class="t c" style="left:460px;top:674px;color:#9a9a9a">110</div>
<div class="t c" style="left:501px;top:674px;color:#9a9a9a">120</div>
<div class="t c" style="left:542px;top:674px;color:#9a9a9a">130</div>
<div class="t c" style="left:583px;top:674px;color:#9a9a9a">140</div>
<div class="t c" style="left:624px;top:674px;color:#9a9a9a">150</div>
<div class="t c" style="left:664px;top:674px;color:#9a9a9a">160</div>
<div class="t c" style="left:705px;top:674px;color:#9a9a9a">170</div>
<div class="t c" style="left:746px;top:674px;color:#9a9a9a">180</div>
<div class="t c" style="left:787px;top:674px;color:#9a9a9a">190</div>
<div class="t c" style="left:827px;top:674px;color:#9a9a9a">200</div>
<div class="t c" style="left:868px;top:674px;color:#9a9a9a">210</div>
<div class="t c" style="left:909px;top:674px;color:#9a9a9a">220</div>
<div class="t c" style="left:950px;top:674px;color:#9a9a9a">230</div>
<div class="t c" style="left:991px;top:674px;color:#9a9a9a">240</div>
<div class="t c" style="left:1032px;top:674px;color:#9a9a9a">250</div>
<div class="t" style="left:1068px;top:680px;font-size:8px;color:#888">‹</div>

<!-- status bar -->
<div class="t" style="left:0;top:707px;color:#a8a8a8">Выделить</div>
<div class="t" style="left:60px;top:707px;color:#a8a8a8">Прямоугольное выделение</div>
<div class="t" style="left:188px;top:707px;color:#a8a8a8">Панорамировать вид</div>
<div class="t" style="left:352px;top:707px;color:#a8a8a8">Установить 3D-курсор</div>
<div class="t" style="left:457px;top:707px;color:#a8a8a8">Переместить</div>
<div class="t e" style="right:0;top:707px;color:#a8a8a8">Plane | Вершин:4/4 | Рёбер:4/4 | Граней:1/1 | Треуг.:2 | Пам.: 117.9 MiB | v2.82.</div>
<svg style="left:42px;top:707px" width="420" height="12" fill="none" stroke="#bbb"><rect x="1" y="1" width="6" height="9" rx="3"/><rect x="135.500" y="1" width="6" height="9" rx="3"/><path d="M138.500 3V5"/><rect x="298" y="1" width="6" height="9" rx="3"/><rect x="403" y="1" width="6" height="9" rx="3"/><path d="M406 1V4"/></svg>

</div></body></html>
